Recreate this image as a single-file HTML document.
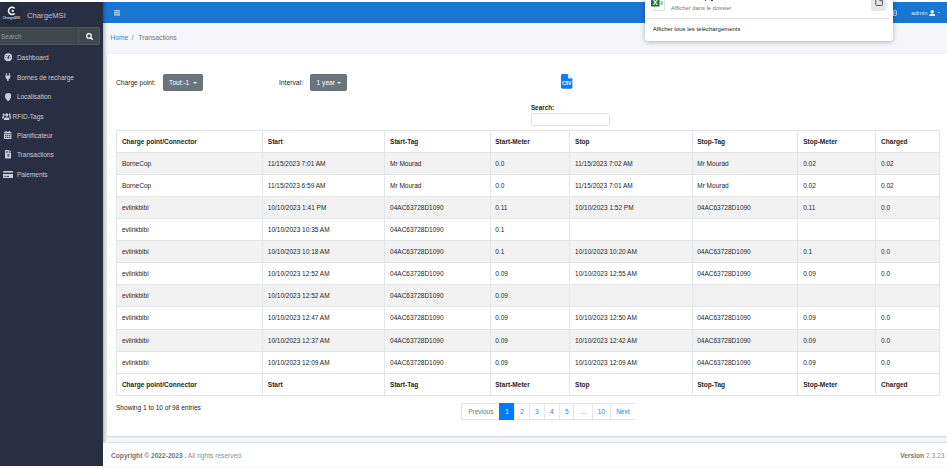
<!DOCTYPE html>
<html lang="fr"><head><meta charset="utf-8"><title>ChargeMSI - Transactions</title>
<style>
*{box-sizing:border-box;margin:0;padding:0}
html,body{width:947px;height:468px;overflow:hidden}
body{background:#f4f6f9;font-family:"Liberation Sans",sans-serif;font-size:6.500px;color:#212529;position:relative}
.abs{position:absolute}
.t{position:absolute;white-space:nowrap;line-height:8px;font-size:6.550px}
#topstrip{left:0;top:0;width:947px;height:2px;background:#fdfdfd}
#sidebar{left:0;top:0;width:103px;height:466.300px;background:#282f43;box-shadow:1px 0 4px rgba(0,0,0,.35)}
#navbar{left:103px;top:0;width:844px;height:23.300px;background:#1976d2}
#logo{left:2.800px;top:5.200px;width:17.500px;height:17.500px;border-radius:50%;background:#262c40;box-shadow:0 1px 3px rgba(0,0,0,.4)}
#sinput{left:-2px;top:27.200px;width:80.600px;height:17.700px;background:#3f474e;border:0.800px solid #4d565e;border-radius:2px 0 0 2px}
#sbtn{left:78.600px;top:27.200px;width:21.200px;height:17.700px;background:#3f474e;border:0.800px solid #4d565e;border-left:none;border-radius:0 2px 2px 0}
.mi{position:absolute;left:0;width:103px;height:12px}
.mi .ic{position:absolute;line-height:0}
.mi .mt{position:absolute;top:2px;font-size:6.500px;color:#c9cdd4;white-space:nowrap;line-height:8px}
#card{left:107px;top:54.300px;width:845px;height:381.400px;background:#fff;border-radius:1.500px;box-shadow:0 0 1px rgba(0,0,0,.125),0 1px 2px rgba(0,0,0,.13)}
#footer{left:103px;top:442.400px;width:844px;height:23.900px;background:#fff;border-top:0.800px solid #dee2e6}
.btn{position:absolute;top:74px;height:17.100px;background:#6c757d;border:0.600px solid #646d74;border-radius:1.800px}
.caret{position:absolute;width:0;height:0;border-left:2.150px solid transparent;border-right:2.150px solid transparent;border-top:2.400px solid #fff}
table.dt{position:absolute;left:116.200px;top:130.100px;border-collapse:collapse;table-layout:fixed;width:622.400px;font-size:6.500px;color:#212529}
table.dt th,table.dt td{border:0.700px solid #e3e6e9;height:22.050px;padding:0 0 0 4.700px;text-align:left;vertical-align:middle;white-space:nowrap;overflow:hidden}
table.dt th{font-weight:bold;font-size:6.550px}
table.dt tr.odd td{background:#f2f2f2}
.pg{position:absolute;top:403px;height:16.800px;border:0.700px solid #e3e6e9;border-right:none;background:#fff;color:#1a82ff;font-size:6.500px;line-height:15.600px;text-align:center}
.pg.pv{color:#6c757d}
.pg.act{background:#007bff;border-color:#007bff;color:#fff}
.pg:last-of-type{border-right:0.700px solid #e3e6e9}
#popup{left:645px;top:-6px;width:248.100px;height:46.500px;background:#fff;border-radius:3.500px;box-shadow:0 1px 5px rgba(0,0,0,.3)}
</style></head><body>
<div id="navbar" class="abs"></div>
<svg class="abs" style="left:113.500px;top:10.200px" width="6.200" height="5.800" viewBox="0 0 13 12"><rect y="0.500" width="13" height="2.300" fill="#d9e7f7"/><rect y="4.800" width="13" height="2.300" fill="#d9e7f7"/><rect y="9.100" width="13" height="2.300" fill="#d9e7f7"/></svg>
<span class="t" style="left:911.200px;top:9.200px;font-size:6px;color:#dfeaf8">admin</span>
<svg class="abs" style="left:928.900px;top:9.800px" width="6.400" height="6.600" viewBox="0 0 14 15"><circle cx="7" cy="3.800" r="3.800" fill="#eef4fb"/><path d="M0 15v-2a4.500 4.500 0 0 1 4.500-4.500h5a4.500 4.500 0 0 1 4.500 4.500v2z" fill="#eef4fb"/></svg>
<i class="caret" style="left:937.600px;top:12.300px;border-top-color:#e3eefa;border-left-width:1.500px;border-right-width:1.500px;border-top-width:1.700px"></i>
<svg class="abs" style="left:890px;top:10.300px" width="7" height="6" viewBox="0 0 14 12"><rect x="1" y="1" width="12" height="10" rx="1.500" fill="none" stroke="#cfe1f5" stroke-width="1.600"/><path d="M7 1v10M1 6h12" stroke="#cfe1f5" stroke-width="1.400"/></svg>
<div id="sidebar" class="abs"></div>
<div id="topstrip" class="abs"></div>
<div id="logo" class="abs"></div>
<svg class="abs" style="left:6.600px;top:6.300px" width="9.800" height="9.800" viewBox="0 0 18 18"><path d="M14 4.500A6.500 6.500 0 1 0 14 13.500" fill="none" stroke="#f1f3f5" stroke-width="2.800"/><circle cx="10.500" cy="9" r="2.100" fill="#f1f3f5"/></svg>
<span class="abs" style="left:2.400px;top:16.900px;font-size:3.400px;line-height:3.400px;font-weight:bold;color:#c9cdd4;white-space:nowrap">ChargeMSI</span>
<span class="t" style="left:27px;top:11.200px;font-size:7.700px;line-height:10px;color:#bfc3ca">ChargeMSI</span>
<div id="sinput" class="abs"></div><div id="sbtn" class="abs"></div>
<span class="t" style="left:1px;top:32.700px;font-size:6.500px;color:#979da3">Search</span>
<svg class="abs" style="left:85.800px;top:33px" width="7.400" height="7.400" viewBox="0 0 14 14"><circle cx="5.600" cy="5.600" r="4.300" fill="none" stroke="#fff" stroke-width="2.300"/><path d="M8.800 8.800L13 13" stroke="#fff" stroke-width="2.700" stroke-linecap="round"/></svg>
<span class="abs" style="left:3.8px;top:53.2px;line-height:0"><svg viewBox="0 0 16 16" width="8.5" height="8.5" preserveAspectRatio="none"><circle cx="8" cy="8" r="7.5" fill="#c9cdd4"/><path d="M8 8 L10.5 3.5" stroke="#282f43" stroke-width="1.8"/><circle cx="8" cy="9" r="1.8" fill="#282f43"/><circle cx="3.5" cy="8.5" r="0.9" fill="#282f43"/><circle cx="5" cy="4.8" r="0.9" fill="#282f43"/><circle cx="12.5" cy="8.5" r="0.9" fill="#282f43"/></svg></span><span class="t" style="left:16.9px;top:54.2px;font-size:6.500px;color:#c9cdd4">Dashboard</span>
<span class="abs" style="left:5.0px;top:73.2px;line-height:0"><svg viewBox="0 0 12 16" width="5.8" height="8.0" preserveAspectRatio="none"><path d="M3 0.800v4M9 0.800v4" stroke="#c9cdd4" stroke-width="1.900" stroke-linecap="round"/><path d="M0.300 5h11.400v1.700h-0.900V8.200a4.800 4.800 0 0 1-3.300 4.500V16H4.500v-3.300A4.800 4.800 0 0 1 1.200 8.200V6.700H0.300z" fill="#c9cdd4"/></svg></span><span class="t" style="left:16.9px;top:73.8px;font-size:6.500px;color:#c9cdd4">Bornes de recharge</span>
<span class="abs" style="left:4.8px;top:92.5px;line-height:0"><svg viewBox="0 0 12 16" width="6.4" height="8.5" preserveAspectRatio="none"><path d="M6 0a6 6 0 0 0-6 6c0 2.4.8 3.1 5.4 9.7a.75.75 0 0 0 1.2 0C11.200 9.1 12 8.400 12 6a6 6 0 0 0-6-6z" fill="#c9cdd4"/></svg></span><span class="t" style="left:16.9px;top:93.2px;font-size:6.500px;color:#c9cdd4">Localisation</span>
<span class="abs" style="left:1.7px;top:112.6px;line-height:0"><svg viewBox="0 0 20 14" width="9.4" height="7.6" preserveAspectRatio="none"><circle cx="10" cy="3.6" r="3.2" fill="#c9cdd4"/><path d="M4 14v-1.500a4 4 0 0 1 4-4h4a4 4 0 0 1 4 4V14z" fill="#c9cdd4"/><circle cx="3.500" cy="3" r="2.200" fill="#c9cdd4"/><circle cx="16.500" cy="3" r="2.200" fill="#c9cdd4"/><path d="M0 10v-1.500a2.500 2.500 0 0 1 2.500-2.500h2.500l-1.500 4zM20 10v-1.500a2.500 2.500 0 0 0-2.500-2.500h-2.500l1.500 4z" fill="#c9cdd4"/></svg></span><span class="t" style="left:12.5px;top:113.0px;font-size:6.500px;color:#c9cdd4">RFID-Tags</span>
<span class="abs" style="left:4.4px;top:131.0px;line-height:0"><svg viewBox="0 0 14 16" width="7.4" height="8.3" preserveAspectRatio="none"><path d="M0 4.500V3a1.500 1.500 0 0 1 1.500-1.500H3V0h2v1.500h4V0h2v1.500h1.500A1.500 1.500 0 0 1 14 3v1.500z" fill="#c9cdd4"/><path d="M0 5.500h14v9a1.500 1.500 0 0 1-1.500 1.500h-11A1.500 1.500 0 0 1 0 14.500z" fill="#c9cdd4"/><g fill="#282f43"><rect x="2" y="7.200" width="2.400" height="2.200"/><rect x="5.800" y="7.200" width="2.400" height="2.200"/><rect x="9.600" y="7.200" width="2.400" height="2.200"/><rect x="2" y="11" width="2.400" height="2.200"/><rect x="5.800" y="11" width="2.400" height="2.200"/><rect x="9.600" y="11" width="2.400" height="2.200"/></g></svg></span><span class="t" style="left:16.9px;top:131.8px;font-size:6.500px;color:#c9cdd4">Planificateur</span>
<span class="abs" style="left:4.8px;top:150.3px;line-height:0"><svg viewBox="0 0 12 16" width="6.6" height="8.5" preserveAspectRatio="none"><path d="M0 1.500A1.500 1.500 0 0 1 1.500 0H7v4.200a.8.800 0 0 0 .8.800H12v9.500a1.500 1.500 0 0 1-1.500 1.500h-9A1.500 1.500 0 0 1 0 14.500z" fill="#c9cdd4"/><path d="M8 0l4 4H8z" fill="#c9cdd4"/><rect x="2" y="2" width="3.500" height="1" fill="#282f43"/><rect x="2" y="4" width="3.500" height="1" fill="#282f43"/><text x="6" y="13.500" font-size="7" font-weight="bold" text-anchor="middle" fill="#282f43" font-family="Liberation Sans, sans-serif">$</text></svg></span><span class="t" style="left:16.9px;top:151.2px;font-size:6.500px;color:#c9cdd4">Transactions</span>
<span class="abs" style="left:3.0px;top:170.8px;line-height:0"><svg viewBox="0 0 18 14" width="10.2" height="7.4" preserveAspectRatio="none"><rect x="0" y="0" width="18" height="14" rx="1.800" fill="#c9cdd4"/><rect x="0" y="3" width="18" height="2.600" fill="#282f43"/><rect x="2.200" y="9.300" width="2.600" height="1.700" fill="#282f43"/><rect x="6" y="9.300" width="4.600" height="1.700" fill="#282f43"/></svg></span><span class="t" style="left:16.9px;top:171.1px;font-size:6.500px;color:#c9cdd4">Paiements</span>

<span class="t" style="left:110.500px;top:34px;font-size:6.600px;color:#1a82ff">Home</span><span class="t" style="left:131.700px;top:34px;font-size:6.600px;color:#6c757d">/</span><span class="t" style="left:138.300px;top:34px;font-size:6.750px;color:#6c757d">Transactions</span>
<div id="card" class="abs"></div>
<span class="t" style="left:116.100px;top:78.600px;font-size:6.600px">Charge point:</span>
<div class="btn" style="left:163.100px;width:39.900px"></div>
<span class="t" style="left:169.100px;top:78.600px;font-size:6.600px;color:#fff">Tout:-1</span><i class="caret" style="left:193px;top:81.600px"></i>
<span class="t" style="left:279px;top:78.600px;font-size:6.700px">Interval:</span>
<div class="btn" style="left:310.300px;width:36.700px"></div>
<span class="t" style="left:316.600px;top:78.600px;font-size:6.600px;color:#fff">1 year</span><i class="caret" style="left:337.200px;top:81.600px"></i>
<svg class="abs" style="left:561.300px;top:74.200px" width="11.400" height="14.800" viewBox="0 0 23 30"><path d="M0 3a3 3 0 0 1 3-3h11l9 9v18a3 3 0 0 1-3 3H3a3 3 0 0 1-3-3z" fill="#0d7bff"/><path d="M14 0v6.500a2.500 2.500 0 0 0 2.500 2.500H23z" fill="#fff" opacity=".95"/><text x="11.500" y="22.500" font-size="9.500" font-weight="bold" fill="#fff" text-anchor="middle" font-family="Liberation Sans, sans-serif" letter-spacing="-0.300">CSV</text></svg>
<span class="t" style="left:530.900px;top:103.500px;font-weight:bold;font-size:6.350px">Search:</span>
<div class="abs" style="left:530.500px;top:112.500px;width:79.200px;height:13.800px;border:0.800px solid #dde1e6;border-radius:1.800px;background:#fff"></div>
<table class="dt"><colgroup><col style="width:145.9px"><col style="width:122.3px"><col style="width:105.2px"><col style="width:79.8px"><col style="width:122.2px"><col style="width:105.9px"><col style="width:77.9px"><col style="width:63.2px"></colgroup><thead><tr><th>Charge point/Connector</th><th>Start</th><th>Start-Tag</th><th>Start-Meter</th><th>Stop</th><th>Stop-Tag</th><th>Stop-Meter</th><th>Charged</th></tr></thead><tbody><tr class="odd"><td>BorneCop</td><td>11/15/2023 7:01 AM</td><td>Mr Mourad</td><td>0.0</td><td>11/15/2023 7:02 AM</td><td>Mr Mourad</td><td>0.02</td><td>0.02</td></tr><tr class="even"><td>BorneCop</td><td>11/15/2023 6:59 AM</td><td>Mr Mourad</td><td>0.0</td><td>11/15/2023 7:01 AM</td><td>Mr Mourad</td><td>0.02</td><td>0.02</td></tr><tr class="odd"><td>evlinkbibi</td><td>10/10/2023 1:41 PM</td><td>04AC63728D1090</td><td>0.11</td><td>10/10/2023 1:52 PM</td><td>04AC63728D1090</td><td>0.11</td><td>0.0</td></tr><tr class="even"><td>evlinkbibi</td><td>10/10/2023 10:35 AM</td><td>04AC63728D1090</td><td>0.1</td><td></td><td></td><td></td><td></td></tr><tr class="odd"><td>evlinkbibi</td><td>10/10/2023 10:18 AM</td><td>04AC63728D1090</td><td>0.1</td><td>10/10/2023 10:20 AM</td><td>04AC63728D1090</td><td>0.1</td><td>0.0</td></tr><tr class="even"><td>evlinkbibi</td><td>10/10/2023 12:52 AM</td><td>04AC63728D1090</td><td>0.09</td><td>10/10/2023 12:55 AM</td><td>04AC63728D1090</td><td>0.09</td><td>0.0</td></tr><tr class="odd"><td>evlinkbibi</td><td>10/10/2023 12:52 AM</td><td>04AC63728D1090</td><td>0.09</td><td></td><td></td><td></td><td></td></tr><tr class="even"><td>evlinkbibi</td><td>10/10/2023 12:47 AM</td><td>04AC63728D1090</td><td>0.09</td><td>10/10/2023 12:50 AM</td><td>04AC63728D1090</td><td>0.09</td><td>0.0</td></tr><tr class="odd"><td>evlinkbibi</td><td>10/10/2023 12:37 AM</td><td>04AC63728D1090</td><td>0.09</td><td>10/10/2023 12:42 AM</td><td>04AC63728D1090</td><td>0.09</td><td>0.0</td></tr><tr class="even"><td>evlinkbibi</td><td>10/10/2023 12:09 AM</td><td>04AC63728D1090</td><td>0.09</td><td>10/10/2023 12:09 AM</td><td>04AC63728D1090</td><td>0.09</td><td>0.0</td></tr></tbody><tfoot><tr><th>Charge point/Connector</th><th>Start</th><th>Start-Tag</th><th>Start-Meter</th><th>Stop</th><th>Stop-Tag</th><th>Stop-Meter</th><th>Charged</th></tr></tfoot></table>
<span class="t" style="left:116px;top:404px;font-size:6.560px">Showing 1 to 10 of 98 entries</span>
<span class="pg pv" style="left:461.2px;width:38.3px">Previous</span><span class="pg act" style="left:499.0px;width:15.3px">1</span><span class="pg " style="left:513.8px;width:15.3px">2</span><span class="pg " style="left:528.6px;width:15.5px">3</span><span class="pg " style="left:543.6px;width:15.5px">4</span><span class="pg " style="left:558.6px;width:15.2px">5</span><span class="pg pv" style="left:573.3px;width:18.7px">…</span><span class="pg " style="left:591.5px;width:18.9px">10</span><span class="pg " style="left:609.9px;width:24.9px">Next</span>
<div id="footer" class="abs"></div>
<span class="t" style="left:111px;top:452.100px;font-size:6.650px;color:#869099"><b style="color:#6c757d">Copyright © 2022-2023 .</b> All rights reserved.</span>
<span class="t" style="right:2.500px;top:452.100px;font-size:6.650px;color:#869099"><b style="color:#6c757d">Version</b> 2.3.23</span>
<div class="abs" style="left:0;top:466.300px;width:947px;height:2px;background:#fafafa"></div>
<div id="popup" class="abs"></div>
<svg class="abs" style="left:651px;top:-3px" width="14" height="14" viewBox="0 0 28 28"><path d="M6 0h15l6 6v20a1 1 0 0 1-1 1H6z" fill="#fff" stroke="#b9bdc1" stroke-width="1"/><rect x="0" y="2" width="17" height="17" fill="#1d7044"/><text x="8.500" y="16" font-size="15" font-weight="bold" fill="#fff" text-anchor="middle" font-family="Liberation Sans, sans-serif">X</text><rect x="19" y="9" width="5" height="2" fill="#3aa06a"/><rect x="19" y="13" width="5" height="2" fill="#3aa06a"/></svg>
<span class="t" style="left:671px;top:3.900px;font-size:5.820px;color:#70757a">Afficher dans le dossier</span>
<div class="abs" style="left:871px;top:-6px;width:15.300px;height:17px;background:#e4e6e8;border-radius:2px"></div>
<svg class="abs" style="left:874.800px;top:-1px" width="8.200" height="7.400" viewBox="0 0 16 14"><path d="M1.500 0v10.500a2 2 0 0 0 2 2h9a2 2 0 0 0 2-2V3h-6" fill="none" stroke="#4a4d51" stroke-width="1.800"/></svg>
<div class="abs" style="left:704.500px;top:0;width:1.600px;height:1px;background:#444"></div><div class="abs" style="left:711px;top:0;width:1.600px;height:1px;background:#444"></div>
<div class="abs" style="left:648.900px;top:17.800px;width:240px;height:0.800px;background:#dcdfe2"></div>
<span class="t" style="left:652.700px;top:25.200px;font-size:5.950px;color:#202124">Afficher tous les téléchargements</span>
</body></html>
